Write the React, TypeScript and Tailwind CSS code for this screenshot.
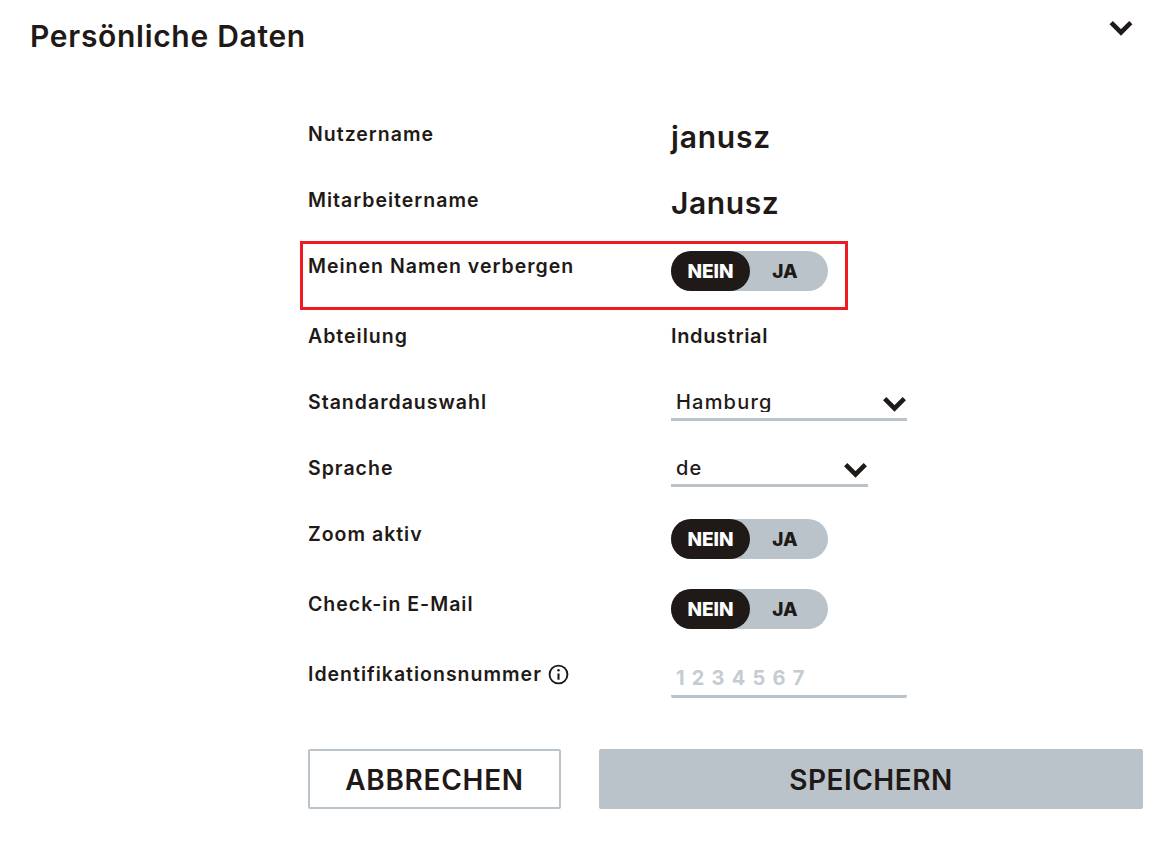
import type { ReactNode } from 'react';

const font = { fontFamily: 'Inter, "Noto Sans", sans-serif' };

function Chevron({ className }: { className: string }) {
  return (
    <svg viewBox="0 0 24 16" fill="none" className={className}>
      <path d="M2.2 2.6 L12 12.4 L21.8 2.6" stroke="#1f1a17" strokeWidth="4.6" />
    </svg>
  );
}

function Toggle() {
  return (
    <div className="mt-[-3px] flex h-[40px] w-[157px] rounded-[20px] bg-[#bac3c9] text-[19px] font-extrabold text-[#1f1a17]">
      <div className="flex w-[79px] items-center justify-center rounded-[20px] bg-[#1f1a17] pt-[2px] text-white">NEIN</div>
      <div className="flex flex-1 items-center justify-center pt-[2px] pr-[8px]">JA</div>
    </div>
  );
}

function Select({ value, width }: { value: string; width: string }) {
  return (
    <div className={`${width} relative h-[31px] border-b-[3px] border-[#bac3c9]`}>
      <div className="h-[22px] overflow-hidden pl-[5px] text-[20px] leading-[24px] font-medium tracking-[1.2px]">{value}</div>
      <Chevron className="absolute top-[6px] right-[0px] h-[16px] w-[25px]" />
    </div>
  );
}

function Row({ label, height, children }: { label: ReactNode; height: string; children: ReactNode }) {
  return (
    <div className={`${height} flex`}>
      <div className="flex h-[24px] w-[363px] items-center gap-[6px] text-[19.5px] leading-[24px] font-semibold tracking-[1px]">{label}</div>
      <div>{children}</div>
    </div>
  );
}

export default function App() {
  return (
    <div style={font} className="h-[867px] bg-white text-[#1f1a17]">
      <div className="flex h-[122px] items-start justify-between pt-[17px] pr-[33px] pl-[30px]">
        <h1 className="text-[30px] leading-[38px] font-semibold tracking-[0.7px]">Persönliche Daten</h1>
        <Chevron className="mt-[3px] h-[16px] w-[26px]" />
      </div>

      <div className="ml-[308px] w-[835px]">
        <Row label="Nutzername" height="h-[66px]">
          <div className="text-[30px] leading-[30px] font-semibold tracking-[0.8px]">janusz</div>
        </Row>
        <Row label="Mitarbeitername" height="h-[66px]">
          <div className="text-[30px] leading-[30px] font-semibold tracking-[0.6px]">Janusz</div>
        </Row>
        <div className="relative">
          <div className="absolute top-[-13px] left-[-8px] h-[69px] w-[548px] border-[3px] border-[#ed1c24]" />
          <Row label="Meinen Namen verbergen" height="h-[70px]">
            <Toggle />
          </Row>
        </div>
        <Row label="Abteilung" height="h-[66px]">
          <div className="text-[20px] leading-[25px] font-semibold tracking-[0.65px]">Industrial</div>
        </Row>
        <Row label="Standardauswahl" height="h-[66px]">
          <Select value="Hamburg" width="w-[236px]" />
        </Row>
        <Row label="Sprache" height="h-[66px]">
          <Select value="de" width="w-[197px]" />
        </Row>
        <Row label="Zoom aktiv" height="h-[70px]">
          <Toggle />
        </Row>
        <Row label="Check-in E-Mail" height="h-[70px]">
          <Toggle />
        </Row>
        <Row
          label={
            <>
              Identifikationsnummer
              <svg viewBox="0 0 20 20" fill="none" className="h-[21px] w-[21px]">
                <circle cx="10" cy="10" r="8.5" stroke="#1f1a17" strokeWidth="1.8" />
                <path d="M10 9v6" stroke="#1f1a17" strokeWidth="2" />
                <circle cx="10" cy="6" r="1.2" fill="#1f1a17" />
              </svg>
            </>
          }
          height="h-[87px]"
        >
          <div className="h-[36px] w-[236px] rounded-b-[2px] border-b-[3px] border-[#bac3c9] pl-[5px] text-[20px] leading-[33px] font-bold tracking-[7.2px] text-[#c4ccd2]">
            1234567
          </div>
        </Row>

        <div className="flex gap-[38px]">
          <button className="h-[60px] w-[253px] rounded-[2px] border-2 border-[#bac3c9] pt-[2px] text-[28px] font-semibold tracking-[0.7px]">ABBRECHEN</button>
          <button className="h-[60px] flex-1 rounded-[2px] bg-[#bac3c9] pt-[2px] text-[28px] font-semibold tracking-[0.5px]">SPEICHERN</button>
        </div>
      </div>
    </div>
  );
}
